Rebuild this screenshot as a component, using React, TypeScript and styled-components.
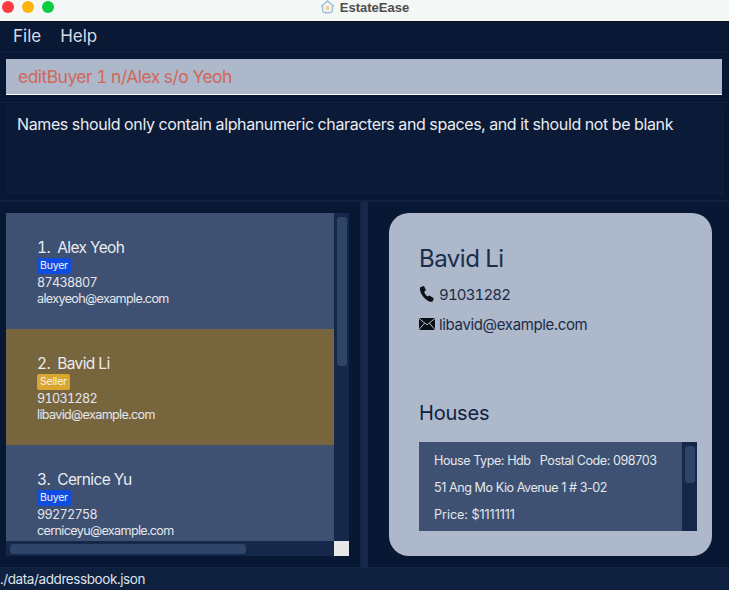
import styled, { createGlobalStyle } from 'styled-components';

const GlobalStyle = createGlobalStyle`
    html, body {
        margin: 0;
        padding: 0;
        background: #081834;
    }

    body {
        font-family: "Inter", "Liberation Sans", sans-serif;
        font-variant-numeric: tabular-nums;
        overflow: hidden;
    }
`

type Person = {
    index: number;
    name: string;
    tag: 'Buyer' | 'Seller';
    phone: string;
    email: string;
}

const people: Person[] = [
    { index: 1, name: 'Alex Yeoh', tag: 'Buyer', phone: '87438807', email: 'alexyeoh@example.com' },
    { index: 2, name: 'Bavid Li', tag: 'Seller', phone: '91031282', email: 'libavid@example.com' },
    { index: 3, name: 'Cernice Yu', tag: 'Buyer', phone: '99272758', email: 'cerniceyu@example.com' },
];

function PhoneIcon() {
    return (
        <svg width="16" height="16" viewBox="0 0 16 16">
            <path fill="#0b0f16" d="M1.6 1 L5 0 L6.9 4.3 L5.2 5.8 C5.6 7.6 6.8 9.4 8.6 10.6 L10.4 9.4 L14.8 12.3 L13.8 15.2 C13 16 11.4 16 9.8 15.2 C5.4 13.2 1.6 8.2 1 3.6 C0.9 2.4 1 1.6 1.6 1 Z" />
        </svg>
    );
}

function MailIcon() {
    return (
        <svg width="16" height="12" viewBox="0 0 16 12">
            <path fill="#0b0f16" d="M0 0 H16 V12 H0 Z" />
            <path fill="none" stroke="#adb8ca" strokeWidth="1" d="M0 0.4 L8 6.8 L16 0.4 M0 11.8 L5.6 5 M16 11.8 L10.4 5" />
        </svg>
    );
}

function HouseIcon() {
    return (
        <svg width="15" height="15" viewBox="0 0 14 14">
            <path fill="#f2f5f4" stroke="#8fb2cc" strokeWidth="1" d="M1 6 L7 1 L13 6 M2.5 5.5 V10.5 C3.5 12.5 10.5 12.5 11.5 10.5 V5.5" />
            <rect x="5.5" y="5.5" width="3" height="4" fill="#f0cfa0" />
        </svg>
    );
}

export default function App() {
    return (
        <>
            <GlobalStyle />
            <Window>
                <TitleBar>
                    <Lights>
                        <Light $color="#fc3a3f" />
                        <Light $color="#fdb40d" />
                        <Light $color="#0ccb42" />
                    </Lights>
                    <Title>
                        <HouseIcon />
                        <span>EstateEase</span>
                    </Title>
                </TitleBar>

                <MenuBar>
                    <span>File</span>
                    <span>Help</span>
                </MenuBar>

                <CommandArea>
                    <CommandBox>editBuyer 1 n/Alex s/o Yeoh</CommandBox>
                </CommandArea>

                <ResultArea>
                    <ResultBox>Names should only contain alphanumeric characters and spaces, and it should not be blank</ResultBox>
                </ResultArea>

                <Main>
                    <ListPane>
                        <ListFrame>
                            <ListViewport>
                                {people.map((p) => (
                                    <Card key={p.index} $selected={p.index === 2}>
                                        <CardName>{p.index}.&nbsp; {p.name}</CardName>
                                        <Tag $kind={p.tag}>{p.tag}</Tag>
                                        <CardLine>{p.phone}</CardLine>
                                        <CardLine>{p.email}</CardLine>
                                    </Card>
                                ))}
                            </ListViewport>
                            <VerticalTrack>
                                <Thumb $height={149} />
                            </VerticalTrack>
                            <HorizontalTrack>
                                <HorizontalThumb />
                            </HorizontalTrack>
                            <Corner />
                        </ListFrame>
                    </ListPane>

                    <Splitter />

                    <DetailPane>
                        <DetailCard>
                            <DetailName>Bavid Li</DetailName>
                            <PhoneRow>
                                <IconSlot><PhoneIcon /></IconSlot>
                                91031282
                            </PhoneRow>
                            <ContactRow>
                                <IconSlot><MailIcon /></IconSlot>
                                libavid@example.com
                            </ContactRow>
                            <HousesTitle>Houses</HousesTitle>
                            <HouseList>
                                <HouseBody>
                                    <HouseLine>House Type: Hdb &nbsp; Postal Code: 098703</HouseLine>
                                    <HouseLine>51 Ang Mo Kio Avenue 1 # 3-02</HouseLine>
                                    <PriceLine>Price: $1111111</PriceLine>
                                </HouseBody>
                                <VerticalTrack>
                                    <Thumb $height={37} />
                                </VerticalTrack>
                            </HouseList>
                        </DetailCard>
                    </DetailPane>
                </Main>

                <StatusBar>./data/addressbook.json</StatusBar>
            </Window>
        </>
    );
}

const Window = styled.div`
    width: 729px;
    height: 590px;
    display: flex;
    flex-direction: column;
    background: #081834;
    overflow: hidden;
`

const TitleBar = styled.header`
    height: 22px;
    flex-shrink: 0;
    box-sizing: border-box;
    position: relative;
    display: flex;
    align-items: center;
    justify-content: center;
    background: #f3f7f5;
    border-bottom: 1px solid #0b0f16;
`

const Lights = styled.div`
    position: absolute;
    left: 2px;
    top: 1px;
    display: flex;
    gap: 8px;
`

const Light = styled.i<{ $color: string }>`
    display: block;
    width: 12px;
    height: 12px;
    border-radius: 50%;
    background: ${(p) => p.$color};
`

const Title = styled.div`
    display: flex;
    align-items: center;
    gap: 5px;
    margin-top: -7px;
    font-family: "Liberation Sans", sans-serif;
    font-size: 13px;
    font-weight: 700;
    color: #4e4e4e;
`

const MenuBar = styled.nav`
    height: 31px;
    flex-shrink: 0;
    box-sizing: border-box;
    display: flex;
    align-items: center;
    gap: 19px;
    padding: 0 13px 2px;
    font-size: 17px;
    color: #d5dbe5;
    background: #091834;
    border-bottom: 1px solid #0f2143;
`

const CommandArea = styled.div`
    height: 50px;
    flex-shrink: 0;
    box-sizing: border-box;
    padding: 6px 7px 8px 6px;
    border-bottom: 1px solid #0f2143;
`

const CommandBox = styled.div`
    height: 36px;
    box-sizing: border-box;
    display: flex;
    align-items: center;
    padding: 0 12px;
    font-size: 17.5px;
    letter-spacing: -0.55px;
    color: #d0685a;
    background: #adb8ca;
    border-bottom: 1px solid #ffffff;
`

const ResultArea = styled.div`
    height: 99px;
    flex-shrink: 0;
    box-sizing: border-box;
    padding: 2px 6px 6px;
    border-bottom: 2px solid #10223f;
`

const ResultBox = styled.div`
    height: 100%;
    box-sizing: border-box;
    padding: 7px 10px;
    font-size: 16px;
    line-height: 22px;
    letter-spacing: -0.38px;
    color: #e9ecf1;
    background: #0a1a37;
    border: 1px solid #0e1f3f;
`

const Main = styled.main`
    flex: 1;
    min-height: 0;
    display: flex;
`

const ListPane = styled.section`
    width: 361px;
    flex-shrink: 0;
    box-sizing: border-box;
    padding: 11px 11px 11px 6px;
    border-right: 1px solid #10223f;
`

const ListFrame = styled.div`
    height: 100%;
    display: grid;
    grid-template-columns: 1fr 15px;
    grid-template-rows: 1fr 15px;
    background: #152849;
`

const ListViewport = styled.div`
    overflow: hidden;
    min-height: 0;
`

const Card = styled.article<{ $selected: boolean }>`
    height: 116px;
    box-sizing: border-box;
    padding: 25px 31px 0;
    color: #e6e9ee;
    background: ${(p) => (p.$selected ? '#77653e' : '#3e5172')};
`

const CardName = styled.div`
    font-size: 15.5px;
    line-height: 19px;
    letter-spacing: -0.6px;
    color: #e9ecf0;
`

const Tag = styled.span<{ $kind: 'Buyer' | 'Seller' }>`
    display: block;
    width: fit-content;
    margin: 1px 0;
    padding: 0 3px;
    font-size: 10.5px;
    line-height: 16px;
    letter-spacing: -0.2px;
    border-radius: 2px;
    color: #f2f4f8;
    background: ${(p) => (p.$kind === 'Buyer' ? '#0f4de0' : '#d9a62f')};
`

const CardLine = styled.div`
    font-size: 12.6px;
    line-height: 16px;
    letter-spacing: -0.65px;
    color: #e4e7ec;
`

const VerticalTrack = styled.div`
    width: 15px;
    flex-shrink: 0;
    box-sizing: border-box;
    padding: 4px 2px 0 3px;
    background: #152849;
`

const Thumb = styled.div<{ $height: number }>`
    height: ${(p) => p.$height}px;
    border-radius: 3px;
    background: #2f4469;
`

const HorizontalTrack = styled.div`
    box-sizing: border-box;
    padding: 3px 4px;
    background: #152849;
`

const HorizontalThumb = styled.div`
    width: 236px;
    height: 10px;
    border-radius: 3px;
    background: #2f4469;
`

const Corner = styled.div`
    background: #e8e8e8;
`

const Splitter = styled.div`
    width: 7px;
    flex-shrink: 0;
    background: #152849;
`

const DetailPane = styled.section`
    flex: 1;
    min-width: 0;
    box-sizing: border-box;
    padding: 11px 17px 11px 21px;
`

const DetailCard = styled.div`
    height: 100%;
    box-sizing: border-box;
    padding: 30px 15px 0 30px;
    border-radius: 20px;
    background: #adb8ca;
    color: #1a2a47;
`

const DetailName = styled.h2`
    margin: 0 0 4px;
    font-size: 24px;
    line-height: 32px;
    font-weight: 400;
    letter-spacing: -0.5px;
    color: #1b2c4c;
`

const ContactRow = styled.div`
    height: 30px;
    display: flex;
    align-items: center;
    font-size: 15px;
    letter-spacing: -0.35px;
    color: #1c2b47;
`

const PhoneRow = styled(ContactRow)`
    letter-spacing: -0.85px;
`

const IconSlot = styled.span`
    width: 20px;
    display: flex;
    align-items: center;
`

const HousesTitle = styled.h3`
    margin: 61px 0 16px;
    font-size: 20px;
    line-height: 26px;
    font-weight: 400;
    letter-spacing: -0.2px;
    color: #0f1f3f;
`

const HouseList = styled.div`
    height: 89px;
    display: flex;
    overflow: hidden;
    background: #3e5172;
`

const HouseBody = styled.div`
    flex: 1;
    min-width: 0;
    box-sizing: border-box;
    padding: 5px 15px 0;
`

const HouseLine = styled.div`
    font-size: 12.6px;
    line-height: 27px;
    letter-spacing: -0.45px;
    font-variant-numeric: normal;
    color: #e4e7ec;
    white-space: nowrap;
`

const PriceLine = styled(HouseLine)`
    letter-spacing: -0.05px;
`

const StatusBar = styled.footer`
    height: 23px;
    flex-shrink: 0;
    box-sizing: border-box;
    display: flex;
    align-items: center;
    font-size: 13.5px;
    letter-spacing: -0.4px;
    color: #dfe3ea;
    background: #0f203f;
    border-top: 1px solid #13264a;
`
